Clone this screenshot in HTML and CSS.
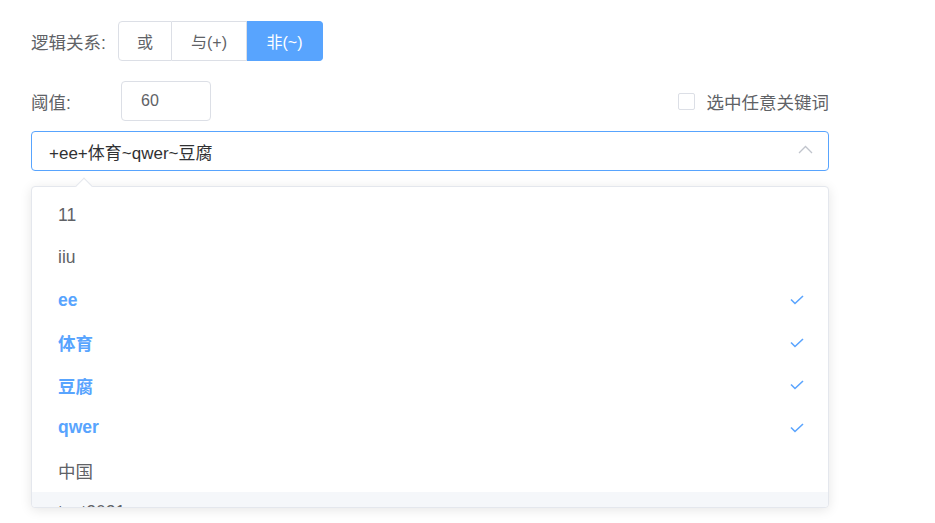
FILE: index.html
```html
<!DOCTYPE html>
<html lang="zh">
<head>
<meta charset="utf-8">
<link rel="stylesheet" href="styles.css">
</head>
<body>
<div class="page">
  <div class="row row-logic">
    <span class="label label-logic">逻辑关系:</span>
    <div class="btn-group">
      <button class="btn">或</button>
      <button class="btn">与(+)</button>
      <button class="btn active">非(~)</button>
    </div>
  </div>
  <div class="row row-threshold">
    <span class="label label-threshold">阈值:</span>
    <div class="num-input">60</div>
    <label class="check">
      <span class="check-box"></span>
      <span class="check-label">选中任意关键词</span>
    </label>
  </div>
  <div class="select">
    <span class="select-text">+ee+体育~qwer~豆腐</span>
    <svg class="chevron" width="15" height="9" viewBox="0 0 15 9"><path d="M1 8 L7.5 1.5 L14 8" fill="none" stroke="#c0c4cc" stroke-width="1.3"/></svg>
  </div>
  <div class="dropdown">
    <span class="popper-arrow"></span>
    <ul class="options">
      <li class="option">11</li>
      <li class="option">iiu</li>
      <li class="option selected">ee<svg class="tick" width="14" height="10" viewBox="0 0 14 10"><path d="M1 4.5 L5 8.5 L13 1" fill="none" stroke="#5aa4fe" stroke-width="1.6"/></svg></li>
      <li class="option selected">体育<svg class="tick" width="14" height="10" viewBox="0 0 14 10"><path d="M1 4.5 L5 8.5 L13 1" fill="none" stroke="#5aa4fe" stroke-width="1.6"/></svg></li>
      <li class="option selected">豆腐<svg class="tick" width="14" height="10" viewBox="0 0 14 10"><path d="M1 4.5 L5 8.5 L13 1" fill="none" stroke="#5aa4fe" stroke-width="1.6"/></svg></li>
      <li class="option selected">qwer<svg class="tick" width="14" height="10" viewBox="0 0 14 10"><path d="M1 4.5 L5 8.5 L13 1" fill="none" stroke="#5aa4fe" stroke-width="1.6"/></svg></li>
      <li class="option">中国</li>
      <li class="option hover">test2021</li>
    </ul>
  </div>
</div>
</body>
</html>
```
FILE: styles.css
```css
* { box-sizing: border-box; }
html, body { margin: 0; padding: 0; background: #fff; }
body {
  font-family: "Liberation Sans", "Noto Sans CJK SC", sans-serif;
  color: #606266;
}
.page {
  width: 935px;
  height: 523px;
  overflow: hidden;
  padding: 21px 0 0 31px;
}
.row {
  display: flex;
  align-items: center;
  width: 798px;
  height: 40px;
}
.row-threshold { margin-top: 20px; }
.label { font-size: 17.5px; color: #606266; }
.label-logic { width: 87px; }
.label-threshold { width: 90px; }
.btn-group { display: flex; height: 40px; }
.btn {
  font-family: "Liberation Sans", "Noto Sans CJK SC", sans-serif;
  font-size: 16px;
  color: #606266;
  background: #fff;
  border: 1px solid #dcdfe6;
  border-left: none;
  padding: 0;
  height: 40px;
  cursor: pointer;
}
.btn:nth-child(1) { width: 54px; border-left: 1px solid #dcdfe6; border-radius: 4px 0 0 4px; }
.btn:nth-child(2) { width: 75px; }
.btn:nth-child(3) { width: 76px; border-radius: 0 4px 4px 0; }
.btn.active { background: #58a4fe; border-color: #58a4fe; color: #fff; }
.num-input {
  width: 90px;
  height: 40px;
  border: 1px solid #dcdfe6;
  border-radius: 4px;
  padding-left: 19px;
  line-height: 38px;
  font-size: 16px;
  color: #606266;
}
.check {
  margin-left: auto;
  display: flex;
  align-items: center;
  gap: 12px;
}
.check-box {
  width: 17px;
  height: 17px;
  border: 1px solid #dcdfe6;
  border-radius: 2px;
  background: #fff;
}
.check-label { font-size: 17.5px; color: #606266; }
.select {
  margin-top: 10px;
  width: 798px;
  height: 40px;
  border: 1px solid #58a4fe;
  border-radius: 4px;
  display: flex;
  align-items: center;
  justify-content: space-between;
  padding: 0 15px 0 17px;
}
.select-text { font-size: 17px; color: #303133; }
.chevron { display: block; margin-top: -3px; }
.dropdown {
  position: relative;
  margin-top: 15px;
  width: 798px;
  height: 322px;
  border: 1px solid #e4e7ed;
  border-radius: 4px;
  background: #fff;
  box-shadow: 0 2px 12px rgba(0, 0, 0, 0.1);
}
.popper-arrow {
  position: absolute;
  top: -7px;
  left: 46px;
  width: 12px;
  height: 12px;
  background: #fff;
  border-top: 1px solid #e4e7ed;
  border-left: 1px solid #e4e7ed;
  transform: rotate(45deg);
}
.options {
  list-style: none;
  margin: 0;
  padding: 7px 0 0;
  height: 320px;
  overflow: hidden;
  border-radius: 4px;
}
.option {
  height: 42.5px;
  display: flex;
  align-items: center;
  justify-content: space-between;
  padding: 0 24px 0 26px;
  font-size: 17.5px;
  color: #606266;
}
.option.selected { color: #58a4fe; font-weight: 700; }
.option.hover { background: #f5f7fa; }
.tick { display: block; }
```
